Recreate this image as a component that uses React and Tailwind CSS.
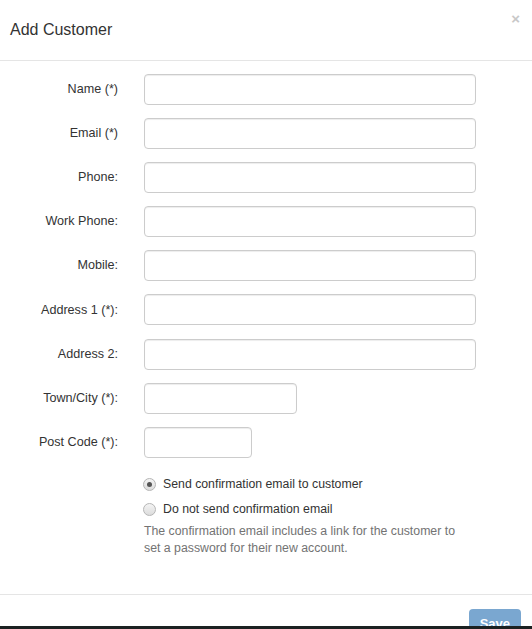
import React from "react";

const fields = [
  { label: "Name (*)", w: "w-[332px]" },
  { label: "Email (*)", w: "w-[332px]" },
  { label: "Phone:", w: "w-[332px]" },
  { label: "Work Phone:", w: "w-[332px]" },
  { label: "Mobile:", w: "w-[332px]" },
  { label: "Address 1 (*):", w: "w-[332px]" },
  { label: "Address 2:", w: "w-[332px]" },
  { label: "Town/City (*):", w: "w-[153px]" },
  { label: "Post Code (*):", w: "w-[108px]" },
];

const Radio = ({ checked, children }) => (
  <label className="flex h-[25px] items-center">
    <span className="ml-[143px] flex h-[13px] w-[13px] items-center justify-center rounded-full border border-[#b5b5b5] bg-gradient-to-b from-[#f4f4f4] to-[#dcdcdc]">
      {checked && <span className="h-[5px] w-[5px] rounded-full bg-[#555]" />}
    </span>
    <span className="ml-[7px] text-[12.3px] text-[#333]">{children}</span>
  </label>
);

const App = () => {
  return (
    <div
      className="flex h-[629px] w-[532px] flex-col overflow-hidden bg-white"
      style={{ fontFamily: '"Liberation Sans", Arial, sans-serif' }}
    >
      <div className="h-[626px] overflow-hidden">
        <header className="relative flex h-[61px] items-center border-b border-[#e5e5e5] pl-[10px]">
          <h4 className="text-[16px] leading-none text-[#333]">Add Customer</h4>
          <span className="absolute right-[12px] top-[8px] text-[15px] font-bold text-[#c8c8c8]">
            ×
          </span>
        </header>

        <div className="pt-[13px]">
          <div className="flex flex-col gap-[13.1px]">
            {fields.map((f) => (
              <div key={f.label} className="flex items-center">
                <label className="w-[118px] text-right text-[12.6px] text-[#333]">
                  {f.label}
                </label>
                <input
                  className={`ml-[26px] h-[31px] ${f.w} rounded-[4px] border border-[#ccc] bg-white shadow-[inset_0_1px_1px_rgba(0,0,0,0.075)] outline-none`}
                />
              </div>
            ))}
          </div>

          <div className="mt-[14px]">
            <Radio checked>Send confirmation email to customer</Radio>
            <Radio>Do not send confirmation email</Radio>
            <p className="ml-[144px] mt-[1px] w-[330px] text-[12.3px] leading-[17px] text-[#737373]">
              The confirmation email includes a link for the customer to set a
              password for their new account.
            </p>
          </div>
        </div>

        <footer className="mt-[37px] flex justify-end border-t border-[#e5e5e5] pr-[11px] pt-[14px]">
          <button className="h-[30px] rounded-[4px] bg-[#7aa7d0] px-[11px] text-[13px] font-bold text-white">
            Save
          </button>
        </footer>
      </div>
      <div className="h-[3px] bg-[#1b2121]" />
    </div>
  );
};

export default App;
